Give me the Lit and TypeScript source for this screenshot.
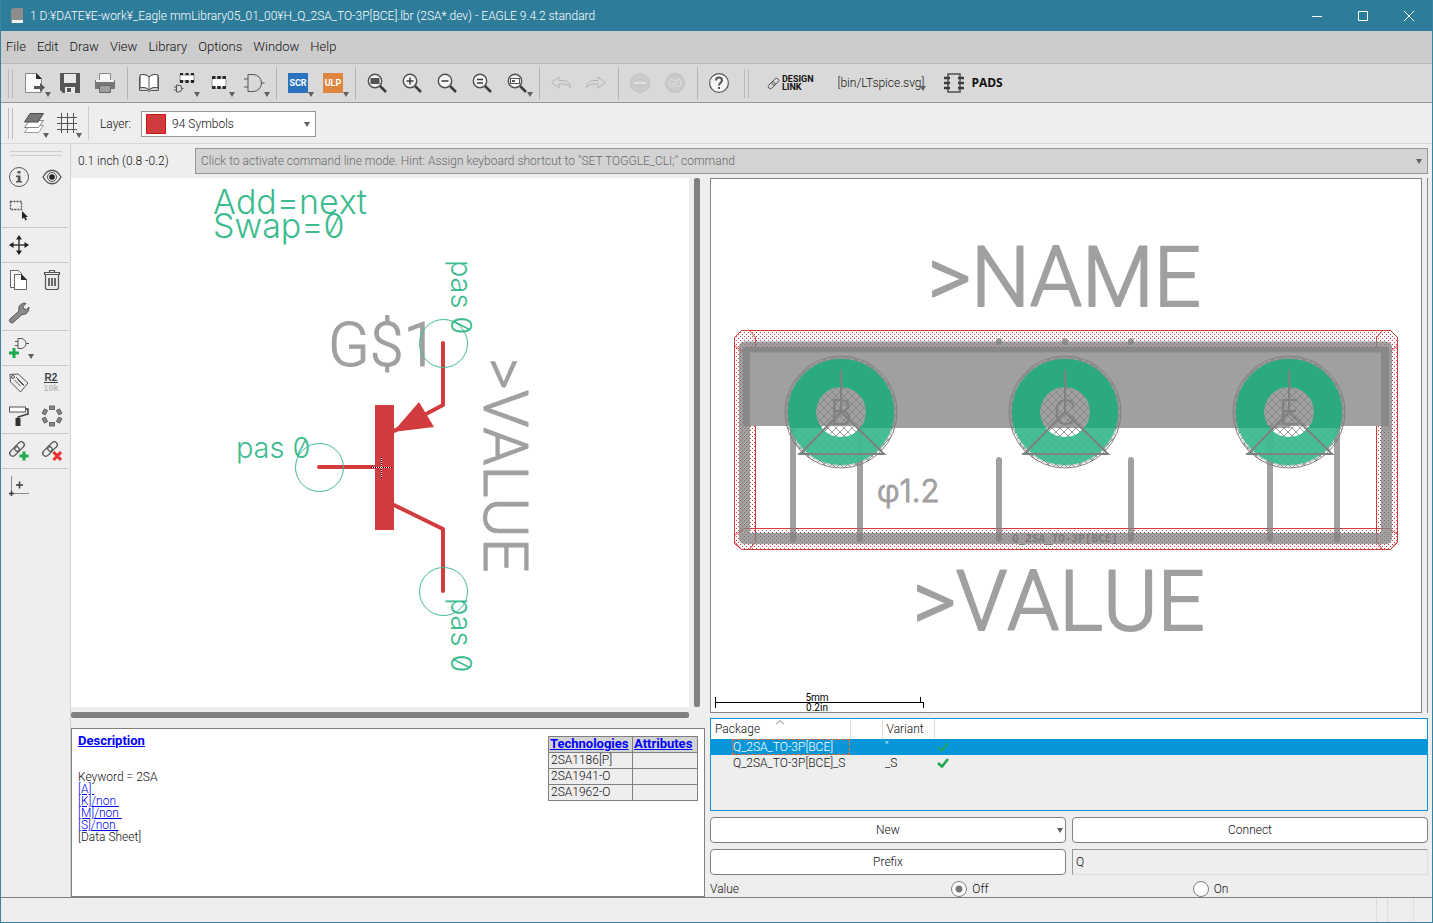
import { LitElement, html, css, svg, nothing, SVGTemplateResult } from 'lit';
import { customElement, property, state } from 'lit/decorators.js';

const lens = svg`
  <path class="ink thick" d="M13 13l6 6" />
  <circle cx="8" cy="8" r="6.7" fill="#f4f4f4" stroke="#4f4f4f" stroke-width="1.4" />`;

const chain = svg`
  <g class="line" stroke-width="1.3" transform="rotate(-45 8 8)">
    <rect x="-1" y="5" width="11" height="6" rx="3" />
    <rect x="6" y="5" width="11" height="6" rx="3" />
  </g>`;

const gate = svg`<path class="line" d="M4 1.500h5a8.500 8.500 0 0 1 0 17h-5zM0 6h4M0 14h4M17.500 10h3" />`;

// every icon is drawn on a 20 x 20 field
const icons: Record<string, SVGTemplateResult> = {
  open: svg`
    <path d="M.5.5h11l5 5v14h-16z" fill="#fafafa" stroke="#8a8a8a" />
    <path d="M11 0l6 6h-6z" fill="#2c2c2c" />
    <path d="M9 13h6v-3l5 4.500-5 4.500v-3H9z" fill="#555" />`,
  save: svg`
    <path d="M0 0h20v20H3l-3-3z" fill="#555" />
    <path d="M4 1h12v9H4zM5 14h10v6H5z" fill="#e8e8e8" />
    <path d="M7 15h4v4H7z" fill="#555" />`,
  print: svg`
    <path d="M4.500.5h11v8h-11z" fill="#f6f6f6" stroke="#8c8c8c" />
    <path d="M0 7h20v9H0z" fill="#777" />
    <path d="M1 7h18v2H1z" fill="#f2f2f2" />
    <path d="M4.500 12.500h11v7h-11z" fill="#a0a0a0" stroke="#666" />`,
  book: svg`
    <path d="M10 4C8 1.500 4 1 1 2v13c3-1 7-.5 9 2 2-2.500 6-3 9-2V2c-3-1-7-.5-9 2z" fill="#fff" stroke="#333" />
    <path class="line" d="M10 4v13M.5 4v13.500h8l1.500 1 1.500-1h8V4" />`,
  device: svg`
    <rect x="6" y="2" width="14" height="6" fill="#fff" stroke="#888" />
    <path d="M6 0h3v2H6zM11.500 0h3v2h-3zM17 0h3v2h-3zM6 7h3v3H6zM11.500 7h3v3h-3zM17 7h3v3h-3z" fill="#222" />
    <path class="line" d="M2.500 12h1.500a4 3.500 0 0 1 0 7H2.500zM0 14h2.500M0 17h2.500M7.500 15.500h2" />`,
  package: svg`
    <rect x="3" y="5" width="14" height="10" rx="2" fill="#fff" stroke="#999" />
    <path d="M3 3h3.500v3H3zM8.300 3h3.500v3H8.300zM13.500 3H17v3h-3.500zM3 13h3.500v3H3zM8.300 13h3.500v3H8.300zM13.500 13H17v3h-3.500z" fill="#2b2b2b" />`,
  gate,
  scr: svg`<rect width="20" height="20" fill="#2a72bd" /><text class="badge" x="10" y="13" text-anchor="middle">SCR</text>`,
  ulp: svg`<rect width="20" height="20" fill="#de853f" /><text class="badge" x="10" y="13" text-anchor="middle">ULP</text>`,
  fit: svg`${lens}<rect x="3.500" y="5" width="9" height="6" fill="#555" />`,
  zoomIn: svg`${lens}<path class="ink" d="M4.500 8h7M8 4.500v7" />`,
  zoomOut: svg`${lens}<path class="ink" d="M4.500 8h7" />`,
  redraw: svg`${lens}<path class="ink" d="M5 6.500h6M5 10h6" />`,
  zoomSelect: svg`${lens}<rect x="3.500" y="5.500" width="9" height="5" fill="#fff" stroke="#555" /><rect x="5" y="7" width="3" height="2" fill="#555" />`,
  undo: svg`<path d="M.5 9.500L8 4v3.500h3c5 0 8 2 8.500 7-2-2.500-4-3.500-8-3.500H8v4z" fill="none" stroke="#b4b4b4" />`,
  redo: svg`<path d="M19.500 9.500L12 4v3.500H9c-5 0-8 2-8.500 7 2-2.500 4-3.500 8-3.500H12v4z" fill="none" stroke="#b4b4b4" />`,
  stop: svg`<circle cx="10" cy="10" r="9.500" fill="#cacaca" stroke="#c2c2c2" /><path d="M4 10h12" stroke="#e2e2e2" stroke-width="2" />`,
  go: svg`<circle cx="10" cy="10" r="9.500" fill="#cacaca" stroke="#c2c2c2" /><text class="go" x="10" y="14" text-anchor="middle">GO</text>`,
  help: svg`<circle cx="10" cy="10" r="9.400" fill="#f6f6f6" stroke="#555" stroke-width="1.200" />
    <path d="M7 7.500c0-4 6-4 6 0 0 2-3 2.500-3 5M10 14v2" fill="none" stroke="#555" stroke-width="2" />`,
  layers: svg`
    <path d="M.5 19.500l5-7h14l-5 7z" fill="#fff" stroke="#9a9a9a" />
    <path d="M.5 14.500l5-7h14l-5 7z" fill="#fff" stroke="#8a8a8a" />
    <path d="M.5 9L6 .5h13.500L14 9z" fill="#777" stroke="#4c4c4c" />`,
  grid: svg`<path class="line" d="M4.500 0v20M10.500 0v20M16.500 0v20M0 4.500h20M0 10.500h20M0 16.500h20" />`,
  info: svg`<circle class="line" cx="10" cy="10" r="9.500" />
    <path d="M8.500 4h3v2.500h-3zM7 8.500h4.500V14H13v1.500H7V14h1.700v-4H7z" fill="#555" />`,
  eye: svg`
    <path class="line" stroke-width="1.300" d="M1 10c5-9 13-9 18 0-5 9-13 9-18 0z" />
    <circle class="line" cx="10" cy="10" r="4.500" /><circle cx="10" cy="10" r="2.800" fill="#222" />`,
  group: svg`<rect class="line" x="1.500" y="1.500" width="11" height="8" stroke-dasharray="2 1" stroke-width="1.300" />
    <path d="M13 11v8l2-1.500 1.500 3 1.500-1-1.500-2.500H19z" fill="#222" />`,
  move: svg`<path class="ink" d="M10 2v16M2 10h16" />
    <path d="M10 0l3 4.500H7zM10 20l3-4.500H7zM0 10l4.500-3v6zM20 10l-4.500-3v6z" fill="#222" />`,
  copy: svg`
    <path d="M1.500.5h8l3 3v14h-11z" fill="#fafafa" stroke="#666" />
    <path d="M5.500 4.500h7l5 5v10h-12z" fill="#fff" stroke="#666" /><path d="M12 4l6 6h-6z" fill="#2c2c2c" />`,
  trash: svg`
    <path class="line" stroke-width="1.200" d="M3.500 5v12.500q0 2 2 2h9q2 0 2-2V5M2.500 4.500h15v-2h-15zM7.500 2.500v-2h5v2" />
    <path class="ink" d="M7 8v8M10 8v8M13 8v8" />`,
  wrench: svg`<path d="M1 16l9-8c-1-4 1-7 5-8l2 .5-3 3 1 2.500 2.500.5L20 4c0 5-3 8-7 7.500L4 19.500C2 21-1 18 1 16z" fill="#8a8a8a" stroke="#555" />`,
  addGate: svg`
    <g transform="translate(7)"><path class="line" d="M2 .5h3a5 5 0 0 1 0 10H2zM-1 3.500h3M-1 7.500h3M10 5.500h3" /></g>
    <path d="M5 10v10M0 15h10" stroke="#20a84c" stroke-width="3" />`,
  tag: svg`
    <path class="line" d="M1 1.500l8-.5 10 9-7.500 9L1.500 9z" /><circle class="line" cx="4" cy="4" r="1.500" />
    <path class="line" d="M7 4l8 8M5.500 7l6 6M8.500 6.500l6 6" />`,
  name: svg`<text class="r2" x="9" y="8" text-anchor="middle">R2</text><path class="ink fine" d="M2 9.500h14" />
    <text class="k10" x="9" y="18" text-anchor="middle">10k</text>`,
  paint: svg`<rect x=".5" y="1" width="16" height="5" fill="#fff" stroke="#555" />
    <path class="ink" d="M17 3h2v5l-10 3v2" /><path d="M6.500 12h5v8h-5z" fill="#333" />`,
  ring: svg`<g fill="#888" stroke="#555" stroke-width=".8">
    ${[0, 60, 120, 180, 240, 300].map(a => svg`<rect x="7.500" y="0" width="5" height="3.500" transform="rotate(${a} 10 10)" />`)}</g>`,
  addLink: svg`${chain}<path d="M15 10.500v9M10.500 15h9" stroke="#20a84c" stroke-width="3" />`,
  cutLink: svg`${chain}<path d="M11.500 11l7.500 8M19 11l-7.500 8" stroke="#ee3232" stroke-width="3.200" />`,
  origin: svg`<path d="M2.500 0v20M0 17.500h20" stroke="#8a8a8a" fill="none" /><path class="ink" d="M7 9h7M10.500 5.500v7M0 17.500h5M2.500 15v5" />`,
  pads: svg`<rect class="line" stroke-width="1.600" x="4" y="1" width="12" height="18" />
    <path class="ink thick" d="M0 5h6M0 10h6M0 15h6M14 5h6M14 10h6M14 15h6" />`,
  link: chain,
};

const iconStyles = css`
  .line {
    fill: none;
    stroke: #555;
  }
  .ink {
    fill: none;
    stroke: #3c3c3c;
    stroke-width: 1.5;
  }
  .ink.thick {
    stroke-width: 2.5;
  }
  .ink.fine {
    stroke-width: 1;
  }
  .badge {
    font: bold 9px Roboto, sans-serif;
    fill: #fff;
  }
  .go {
    font: 10px Roboto, sans-serif;
    fill: #dedede;
  }
  .r2 {
    font: bold 10px 'Liberation Sans', sans-serif;
    fill: #444;
  }
  .k10 {
    font: bold 9px 'Liberation Sans', sans-serif;
    fill: #bbb;
  }
`;

@customElement('tool-button')
export class ToolButton extends LitElement {
  @property() icon = '';
  @property() label = '';
  @property({ type: Boolean }) menu = false;
  @property({ type: Boolean }) disabled = false;

  static styles = [
    iconStyles,
    css`
      :host {
        display: block;
        width: var(--tool-size, 35px);
      }
      button {
        position: relative;
        display: flex;
        align-items: center;
        justify-content: center;
        width: 100%;
        height: 100%;
        padding: 0;
        border: 0;
        background: none;
      }
      svg {
        display: block;
        overflow: visible;
      }
      .more {
        position: absolute;
        right: 1px;
        bottom: 5px;
      }
    `,
  ];

  render() {
    return html`
      <button type="button" aria-label=${this.label} title=${this.label} ?disabled=${this.disabled}>
        <svg width="20" height="20" viewBox="0 0 20 20">${icons[this.icon]}</svg>
        ${this.menu
          ? html`<svg class="more" width="6" height="5" viewBox="0 0 6 5"><path d="M0 0h6L3 5z" fill="#606060" /></svg>`
          : nothing}
      </button>
    `;
  }
}

@customElement('symbol-canvas')
export class SymbolCanvas extends LitElement {
  static styles = css`
    :host {
      display: block;
      background: #fff;
    }
    svg {
      display: block;
      width: 100%;
      height: 100%;
    }
    text {
      font-family: Inter, sans-serif;
      font-weight: 300;
      font-feature-settings: 'zero';
      font-kerning: none;
      white-space: pre;
    }
    .pin {
      fill: #3dbb8f;
      font-size: 29px;
    }
    .info {
      fill: #3dbb8f;
      font-size: 34px;
    }
    .name {
      fill: #a0a0a0;
      stroke: #a0a0a0;
      stroke-linejoin: round;
      font-family: Roboto, sans-serif;
      font-size: 61px;
    }
    .ring {
      fill: none;
      stroke: #3dbb8f;
    }
    .wire {
      fill: none;
      stroke: #d23c3e;
      stroke-width: 4;
      stroke-linecap: round;
      stroke-linejoin: round;
    }
    .body {
      fill: #d23c3e;
    }
  `;

  render() {
    return html`
      <svg viewBox="71 178 618 529">
        <text class="info" x="213" y="214">Add=next</text>
        <text class="info" x="213" y="238">Swap=0</text>
        <text class="name" x="328" y="366">G$1</text>
        <text class="name" transform="translate(484 358) rotate(90)">&gt;VALUE</text>
        <text class="pin" x="236" y="458">pas 0</text>
        <text class="pin" transform="translate(451 260) rotate(90)">pas 0</text>
        <text class="pin" transform="translate(451 598) rotate(90)">pas 0</text>
        <path class="wire" d="M443 343V405L394 431M319 467H381M394 505L443 529V591" />
        <path class="body" d="M375 405h19v125h-19zM393 432l26-30 15 25z" />
        <circle class="ring" cx="443.500" cy="343.500" r="24" />
        <circle class="ring" cx="319.500" cy="467.500" r="24" />
        <circle class="ring" cx="443.500" cy="591.500" r="24" />
        <path d="M371 467.500h21M381.500 457v21" stroke="#fff" />
        <path d="M371 467.500h21M381.500 457v21" stroke="#000" stroke-dasharray="1 1" />
      </svg>
    `;
  }
}

const PADS = [
  { name: 'B', x: 841 },
  { name: 'C', x: 1065 },
  { name: 'E', x: 1289 },
];

@customElement('package-canvas')
export class PackageCanvas extends LitElement {
  static styles = css`
    :host {
      display: block;
      background: #fff;
    }
    svg {
      display: block;
      width: 100%;
      height: 100%;
    }
    text {
      font-family: Roboto, sans-serif;
      font-weight: 300;
      font-kerning: none;
    }
    .name {
      fill: #a0a0a0;
      stroke: #a0a0a0;
      stroke-width: 2;
      stroke-linejoin: round;
      font-size: 83px;
    }
    .size {
      fill: #a0a0a0;
      stroke: #a0a0a0;
      font-family: Inter, sans-serif;
      font-size: 31px;
    }
    .label {
      fill: #7c7c7c;
      font-family: 'DejaVu Sans Mono', monospace;
      font-size: 11px;
      font-weight: bold;
    }
    .letter {
      fill: #808080;
      font-size: 36px;
    }
    .keepout {
      fill: url(#dots);
      stroke: #d23c3e;
    }
    .slab {
      fill: #a0a0a0;
    }
    .frame {
      fill: none;
      stroke: #808080;
      stroke-width: 11;
      stroke-linejoin: round;
      opacity: 0.75;
    }
    .lead {
      fill: none;
      stroke: #808080;
      stroke-width: 6;
      stroke-linecap: round;
      opacity: 0.75;
    }
    .copper {
      fill: none;
      stroke-width: 28;
      opacity: 0.95;
    }
    .mark {
      fill: none;
      stroke: #808080;
      stroke-width: 2;
    }
    .thin {
      fill: none;
      stroke: #808080;
    }
    .scale {
      fill: none;
      stroke: #000;
    }
    .unit {
      font: 10px Roboto, sans-serif;
      fill: #000;
    }
  `;

  private pad(name: string, x: number) {
    return svg`
      <circle cx=${x} cy="412" r="56" fill="url(#hatch)" />
      <circle class="copper" cx=${x} cy="412" r="39" stroke="#3dbb8f" />
      <circle class="copper" cx=${x} cy="412" r="39" stroke="#2aa97f" clip-path="url(#upper)" />
      <circle class="thin" cx=${x} cy="412" r="56" />
      <circle class="thin" cx=${x} cy="412" r="54" opacity=".5" />
      <path class="mark" d="M${x} 370v42l-41 42h84l-43 -42M${x - 43} 454h86" />
      <text class="letter" x=${x} y="425" text-anchor="middle">${name}</text>
    `;
  }

  render() {
    return html`
      <svg viewBox="711 179 710 533">
        <defs>
          <pattern id="dots" width="4" height="4" patternUnits="userSpaceOnUse">
            <path d="M0 0h1v1H0zM2 2h1v1H2z" fill="#d23c3e" />
          </pattern>
          <pattern id="hatch" width="8" height="8" patternUnits="userSpaceOnUse">
            <path d="M0 0L8 8M8 0L0 8" stroke="#808080" stroke-width=".8" />
          </pattern>
          <clipPath id="upper"><rect x="711" y="340" width="710" height="88" /></clipPath>
        </defs>
        <text class="name" x="928" y="306">&gt;NAME</text>
        <text class="name" x="913" y="630">&gt;VALUE</text>
        <path class="keepout" d="M741.500 330.500h649l7 7v8l-8 7h-646l-9-7v-8z" />
        <path class="keepout" d="M741.500 549.500h649l7-7v-8l-8-6h-646l-9 7v8z" />
        <path class="keepout" d="M734.500 337.500l7-7h8l6 7v204l-6 8h-8l-7-8z" />
        <path class="keepout" d="M1397.500 337.500l-7-7h-8l-6 7v204l6 8h8l7-8z" />
        <path class="slab" d="M743 347H1389V426H1290V428H860V426H743z" />
        <path class="lead" d="M793 428V539M860 428V539M999 460V539M1131 460V539M1270 428V539M1337 428V539" />
        <path class="lead" d="M999 341v1M1065 341v1M1131 341v1" />
        ${PADS.map(p => this.pad(p.name, p.x))}
        <path class="frame" d="M744.500 347H1386.500V538.500H744.500z" />
        <text class="size" x="877" y="502">φ1.2</text>
        <text class="label" x="1065" y="542" text-anchor="middle">Q_2SA_TO-3P[BCE]</text>
        <path class="scale" d="M715.500 697v11M715 702.500h209M920.500 697v6M923.500 702v6" />
        <text class="unit" x="817" y="701" text-anchor="middle">5mm</text>
        <text class="unit" x="817" y="711" text-anchor="middle">0.2in</text>
      </svg>
    `;
  }
}

type Tool = { icon: string; label: string; menu?: boolean; disabled?: boolean };

const MENUS = ['File', 'Edit', 'Draw', 'View', 'Library', 'Options', 'Window', 'Help'];

const ACTIONS: Tool[][] = [
  [
    { icon: 'open', label: 'Open', menu: true },
    { icon: 'save', label: 'Save' },
    { icon: 'print', label: 'Print' },
  ],
  [
    { icon: 'book', label: 'Table of contents' },
    { icon: 'device', label: 'Device', menu: true },
    { icon: 'package', label: 'Package', menu: true },
    { icon: 'gate', label: 'Symbol', menu: true },
  ],
  [
    { icon: 'scr', label: 'Run script', menu: true },
    { icon: 'ulp', label: 'Run ULP', menu: true },
  ],
  [
    { icon: 'fit', label: 'Zoom to fit' },
    { icon: 'zoomIn', label: 'Zoom in' },
    { icon: 'zoomOut', label: 'Zoom out' },
    { icon: 'redraw', label: 'Redraw' },
    { icon: 'zoomSelect', label: 'Zoom select', menu: true },
  ],
  [
    { icon: 'undo', label: 'Undo', disabled: true },
    { icon: 'redo', label: 'Redo', disabled: true },
  ],
  [
    { icon: 'stop', label: 'Stop', disabled: true },
    { icon: 'go', label: 'Go', disabled: true },
  ],
  [{ icon: 'help', label: 'Help' }],
];

const COMMANDS: Tool[][] = [
  [
    { icon: 'info', label: 'Info' },
    { icon: 'eye', label: 'Show' },
    { icon: 'group', label: 'Group' },
  ],
  [{ icon: 'move', label: 'Move' }],
  [
    { icon: 'copy', label: 'Copy' },
    { icon: 'trash', label: 'Delete' },
    { icon: 'wrench', label: 'Change' },
  ],
  [{ icon: 'addGate', label: 'Add', menu: true }],
  [
    { icon: 'tag', label: 'Name' },
    { icon: 'name', label: 'Value' },
    { icon: 'paint', label: 'Paint' },
    { icon: 'ring', label: 'Arrange' },
  ],
  [
    { icon: 'addLink', label: 'Connect' },
    { icon: 'cutLink', label: 'Disconnect' },
  ],
  [{ icon: 'origin', label: 'Mark' }],
];

const PACKAGES = [
  { name: 'Q_2SA_TO-3P[BCE]', variant: "''" },
  { name: 'Q_2SA_TO-3P[BCE]_S', variant: '_S' },
];

@customElement('app-root')
export class AppRoot extends LitElement {
  @state() private selected = 0;
  @state() private value = 'off';

  static styles = [
    iconStyles,
    css`
      :host {
        display: flex;
        flex-direction: column;
        box-sizing: border-box;
        min-height: 100vh;
        border: solid #3885a1;
        border-width: 0 1px 1px;
        background: #eee;
        color: #111;
        font: 300 12px/16px Roboto, Arial, sans-serif;
      }
      * {
        box-sizing: border-box;
      }
      button,
      input,
      select {
        margin: 0;
        font: inherit;
        color: inherit;
      }
      .title {
        display: flex;
        align-items: center;
        height: 31px;
        padding-left: 10px;
        background: #2d7c9a;
        color: #fff;
      }
      .title h1 {
        flex: 1;
        margin: 0 0 0 7px;
        font: inherit;
      }
      .title button {
        display: flex;
        align-items: center;
        justify-content: center;
        width: 46px;
        height: 31px;
        padding: 0;
        border: 0;
        background: none;
      }
      .menus {
        display: flex;
        align-items: center;
        gap: 11px;
        height: 33px;
        padding-left: 5px;
        border-bottom: 1px solid #b9b9b9;
        background: #ccc;
      }
      .menus button {
        padding: 0;
        border: 0;
        background: none;
        font-size: 13px;
      }
      .bar {
        display: flex;
        height: 39px;
        padding-left: 7px;
        border-bottom: 1px solid #979797;
        background: #d9d9d9;
      }
      .grip {
        width: 5px;
        margin: 5px 4px 4px 0;
        border: solid #bbb;
        border-width: 0 1px;
      }
      .bar .grip ~ .grip {
        margin: 5px 18px 4px 8px;
      }
      .group {
        display: flex;
      }
      .group + .group::before {
        content: '';
        margin: 3px 3px 2px 5px;
        border-left: 1px solid #b5b5b5;
      }
      .plugin {
        display: flex;
        align-items: center;
        padding: 0;
        border: 0;
        background: none;
      }
      .design {
        gap: 2px;
        margin-right: 24px;
        font: bold 9px/8px Roboto, sans-serif;
        text-align: left;
      }
      .ltspice {
        margin-right: 18px;
      }
      .ltspice svg {
        margin: 10px 0 0 -4px;
      }
      .pads {
        gap: 7px;
        font: bold 12px/16px 'Open Sans', sans-serif;
      }
      .layerbar {
        --tool-size: 33px;
        display: flex;
        height: 41px;
        padding-left: 7px;
        border-bottom: 1px solid #d6d6d6;
      }
      .layer {
        display: flex;
        align-items: center;
        gap: 10px;
        padding: 2px 0 0 11px;
      }
      .rule {
        margin: 3px 0 3px 5px;
        border-left: 1px solid #ccc;
      }
      .combo {
        display: flex;
        align-items: center;
        width: 175px;
        height: 26px;
        padding: 0 5px 0 4px;
        border: 1px solid #979797;
        background: #fff;
      }
      .swatch {
        width: 20px;
        height: 20px;
        border: 1px solid #c01818;
        background: #d23c3e;
      }
      .combo select {
        flex: 1;
        padding: 0 6px;
        border: 0;
        background: none;
        appearance: none;
      }
      .work {
        display: flex;
        flex: 1;
      }
      .tools {
        --tool-size: 33px;
        width: 70px;
        padding: 7px 1px 0 1px;
        border-right: 1px solid #d2d2d2;
      }
      .tools .hgrip {
        height: 5px;
        margin: 0 7px 4px 8px;
        border: solid #ccc;
        border-width: 1px 0;
      }
      .set {
        display: grid;
        grid-template-columns: 33px 33px;
        grid-auto-rows: 33px;
      }
      .set + .set {
        margin-top: 1px;
        border-top: 1px solid #c9c9c9;
      }
      .main {
        display: flex;
        flex: 1;
        flex-direction: column;
        min-width: 0;
      }
      .command {
        display: flex;
        align-items: center;
        height: 34px;
        padding: 0 4px 0 7px;
      }
      .command output {
        width: 117px;
      }
      .line-edit {
        display: flex;
        flex: 1;
        align-items: center;
        height: 26px;
        padding: 0 5px;
        border: 1px solid #979797;
        background: #d3d3d3;
      }
      .line-edit input {
        flex: 1;
        min-width: 0;
        padding: 0;
        border: 0;
        background: none;
      }
      .line-edit input::placeholder {
        color: #6a6a6a;
        opacity: 1;
      }
      .panes {
        display: grid;
        flex: 1;
        grid-template-columns: minmax(0, 634fr) minmax(0, 718fr);
        gap: 5px;
        padding-right: 4px;
      }
      .pane {
        display: flex;
        flex-direction: column;
      }
      .scrolled {
        display: flex;
        flex: 1;
        gap: 5px;
        padding-right: 5px;
      }
      .scrolled symbol-canvas {
        flex: 1;
      }
      .vbar {
        width: 6px;
        border-radius: 2px;
        background: #808080;
      }
      .hbar {
        height: 6px;
        margin: 5px 16px 10px 0;
        border-radius: 2px;
        background: #808080;
      }
      .description {
        display: flex;
        justify-content: space-between;
        height: 169px;
        padding: 6px 6px 0;
        border: 1px solid #808080;
        background: #fff;
        line-height: 12px;
      }
      .description h2 {
        margin: 0 0 24px;
        font: bold 13px/12px Roboto, sans-serif;
      }
      .description p {
        margin: 0;
      }
      a {
        color: #00f;
      }
      .tech {
        align-self: flex-start;
        width: 150px;
        margin-top: 1px;
        border: 1px solid #aaa;
        border-collapse: collapse;
        background: #eee;
        table-layout: fixed;
      }
      .tech th,
      .tech td {
        height: 16px;
        padding: 0 0 1px 2px;
        border: 1px solid #808080;
        text-align: left;
      }
      .tech th {
        padding: 0 1px 1px;
        background: #d3d3d3;
        font-size: 13px;
        white-space: nowrap;
      }
      .tech th:first-child {
        width: 84px;
      }
      .framed {
        flex: 1;
        padding-right: 5px;
        border-right: 1px solid #8a8a92;
      }
      .framed package-canvas {
        height: 100%;
        box-sizing: border-box;
        border: 1px solid #83858e;
      }
      .packages {
        height: 93px;
        margin: 5px 0 6px;
        border: 1px solid #0896d9;
      }
      .packages table {
        width: 100%;
        border-collapse: collapse;
        table-layout: fixed;
      }
      .packages th {
        position: relative;
        height: 20px;
        padding: 0 4px;
        border-right: 1px solid #ddd;
        background: #fff;
        font-weight: 300;
        text-align: left;
      }
      .packages th:last-child {
        border-right: 0;
      }
      .packages th svg {
        position: absolute;
        top: 1px;
        left: 47%;
      }
      .packages td {
        height: 16px;
        padding: 0 3px;
        line-height: 14px;
        white-space: nowrap;
      }
      .packages td:first-child {
        padding: 0 0 0 21px;
      }
      .packages td svg {
        display: block;
      }
      .packages .focus {
        display: block;
        border: 1px dotted transparent;
      }
      .packages .selected {
        background: #0896d9;
        color: #fff;
      }
      .packages .selected .focus {
        border: 1px dashed #ff6420;
      }
      .selected svg {
        opacity: 0.7;
      }
      .package-col {
        width: 139px;
      }
      .gap-col {
        width: 32px;
      }
      .variant-col {
        width: 52px;
      }
      .form {
        display: grid;
        grid-template-columns: 1fr 1fr;
        gap: 6px;
      }
      .form button {
        position: relative;
        height: 26px;
        padding: 0;
        border: 1px solid #808080;
        border-radius: 4px;
        background: #fff;
      }
      .form button svg {
        position: absolute;
        top: 10px;
        right: 2px;
      }
      .form input {
        height: 26px;
        min-width: 0;
        padding: 0 3px;
        border: 1px solid;
        border-color: #999 #ddd #ddd #999;
        border-radius: 0;
        background: #eee;
      }
      .choice {
        display: grid;
        grid-template-columns: repeat(3, 1fr);
        gap: 6px;
        height: 16px;
        margin: 6px 0 0;
      }
      .choice label {
        display: flex;
        align-items: center;
        gap: 5px;
      }
      .choice input {
        width: 16px;
        height: 16px;
        border: 1px solid #808080;
        border-radius: 50%;
        background: #fff;
        appearance: none;
      }
      .choice input:checked {
        background: radial-gradient(circle, #777 3px, #fff 4px);
      }
      .status {
        display: flex;
        justify-content: flex-end;
        height: 25px;
        padding-right: 18px;
        border-top: 1px solid #808080;
      }
      .status span {
        width: 26px;
        border-left: 1px solid #ddd;
      }
      .status span:first-child {
        width: 11px;
      }
      .status span:last-child {
        width: 1px;
      }
    `,
  ];

  private arrow() {
    return html`<svg width="6" height="5" viewBox="0 0 6 5"><path d="M0 0h6L3 5z" fill="#606060" /></svg>`;
  }

  private tools(groups: Tool[][], name: string) {
    return groups.map(
      group => html`
        <div class=${name}>
          ${group.map(
            t => html`<tool-button
              icon=${t.icon}
              label=${t.label}
              ?menu=${t.menu}
              ?disabled=${t.disabled}
            ></tool-button>`
          )}
        </div>
      `
    );
  }

  private renderHeader() {
    return html`
      <header class="title">
        <svg width="12" height="16" viewBox="0 0 12 16">
          <path d="M2 0h10v15H0V2z" fill="#8d8d8d" />
          <path d="M1 12h11v3H1z" fill="#f4f4f4" />
        </svg>
        <h1>1 D:¥DATE¥E-work¥_Eagle mmLibrary05_01_00¥H_Q_2SA_TO-3P[BCE].lbr (2SA*.dev) - EAGLE 9.4.2 standard</h1>
        <button type="button" aria-label="Minimize">
          <svg width="10" height="10"><path d="M0 5.500h10" stroke="#fff" /></svg>
        </button>
        <button type="button" aria-label="Maximize">
          <svg width="10" height="10"><path d="M.5.5h9v9h-9z" fill="none" stroke="#fff" /></svg>
        </button>
        <button type="button" aria-label="Close">
          <svg width="10" height="10"><path d="M0 0l10 10M10 0L0 10" stroke="#fff" /></svg>
        </button>
      </header>
      <nav class="menus">${MENUS.map(m => html`<button type="button">${m}</button>`)}</nav>
      <div class="bar">
        <span class="grip"></span>
        ${this.tools(ACTIONS, 'group')}
        <span class="grip"></span>
        <button type="button" class="plugin design">
          <svg width="13" height="13" viewBox="-1 -1 18 18">${icons.link}</svg>
          <span>DESIGN<br />LINK</span>
        </button>
        <button type="button" class="plugin ltspice">[bin/LTspice.svg]${this.arrow()}</button>
        <button type="button" class="plugin pads">
          <svg width="20" height="20" viewBox="0 0 20 20">${icons.pads}</svg>
          PADS
        </button>
      </div>
      <div class="layerbar">
        <span class="grip"></span>
        <tool-button icon="layers" label="Layer settings" menu></tool-button>
        <tool-button icon="grid" label="Grid" menu></tool-button>
        <span class="rule"></span>
        <div class="layer">
          <label for="layer">Layer:</label>
          <div class="combo">
            <span class="swatch"></span>
            <select id="layer">
              <option>94 Symbols</option>
            </select>
            ${this.arrow()}
          </div>
        </div>
      </div>
    `;
  }

  private renderDescription() {
    return html`
      <section class="description">
        <div>
          <h2><a href="#description">Description</a></h2>
          <p>Keyword = 2SA</p>
          <p><a href="#a">[A]&nbsp;</a></p>
          <p><a href="#k">[K]/non&nbsp;</a></p>
          <p><a href="#m">[M]/non&nbsp;</a></p>
          <p><a href="#s">[S]/non&nbsp;</a></p>
          <p>[Data Sheet]</p>
        </div>
        <table class="tech">
          <thead>
            <tr>
              <th><a href="#technologies">Technologies</a></th>
              <th><a href="#attributes">Attributes</a></th>
            </tr>
          </thead>
          <tbody>
            ${['2SA1186[P]', '2SA1941-O', '2SA1962-O'].map(t => html`<tr><td>${t}</td><td></td></tr>`)}
          </tbody>
        </table>
      </section>
    `;
  }

  private renderPackages() {
    return html`
      <div class="packages">
        <table>
          <thead>
            <tr>
              <th class="package-col">
                Package
                <svg width="8" height="5"><path d="M0 4.500l4-4 4 4" fill="none" stroke="#777" /></svg>
              </th>
              <th class="gap-col"></th>
              <th class="variant-col">Variant</th>
              <th></th>
            </tr>
          </thead>
          <tbody>
            ${PACKAGES.map(
              (p, i) => html`
                <tr class=${i === this.selected ? 'selected' : ''} @click=${() => (this.selected = i)}>
                  <td><span class="focus">${p.name}</span></td>
                  <td></td>
                  <td>${p.variant}</td>
                  <td>
                    <svg width="12" height="10"><path d="M1 5l4 3.500L11 1" fill="none" stroke="#22a94f" stroke-width="2.600" /></svg>
                  </td>
                </tr>
              `
            )}
          </tbody>
        </table>
      </div>
    `;
  }

  private radio(value: string, label: string) {
    return html`
      <label>
        <input
          type="radio"
          name="value"
          .checked=${this.value === value}
          @change=${() => (this.value = value)}
        />
        ${label}
      </label>
    `;
  }

  render() {
    return html`
      ${this.renderHeader()}
      <div class="work">
        <aside class="tools">
          <div class="hgrip"></div>
          ${this.tools(COMMANDS, 'set')}
        </aside>
        <main class="main">
          <div class="command">
            <output>0.1 inch (0.8 -0.2)</output>
            <div class="line-edit">
              <input
                type="text"
                aria-label="Command line"
                placeholder='Click to activate command line mode. Hint: Assign keyboard shortcut to "SET TOGGLE_CLI;" command'
              />
              ${this.arrow()}
            </div>
          </div>
          <div class="panes">
            <div class="pane">
              <div class="scrolled">
                <symbol-canvas></symbol-canvas>
                <div class="vbar"></div>
              </div>
              <div class="hbar"></div>
              ${this.renderDescription()}
            </div>
            <div class="pane">
              <div class="framed"><package-canvas></package-canvas></div>
              ${this.renderPackages()}
              <div class="form">
                <button type="button">New ${this.arrow()}</button>
                <button type="button">Connect</button>
                <button type="button">Prefix</button>
                <input type="text" aria-label="Prefix" value="Q" />
              </div>
              <div class="choice" role="radiogroup" aria-label="Value">
                <span>Value</span>
                ${this.radio('off', 'Off')} ${this.radio('on', 'On')}
              </div>
            </div>
          </div>
        </main>
      </div>
      <footer class="status"><span></span><span></span><span></span></footer>
    `;
  }
}

declare global {
  interface HTMLElementTagNameMap {
    'app-root': AppRoot;
    'tool-button': ToolButton;
    'symbol-canvas': SymbolCanvas;
    'package-canvas': PackageCanvas;
  }
}
